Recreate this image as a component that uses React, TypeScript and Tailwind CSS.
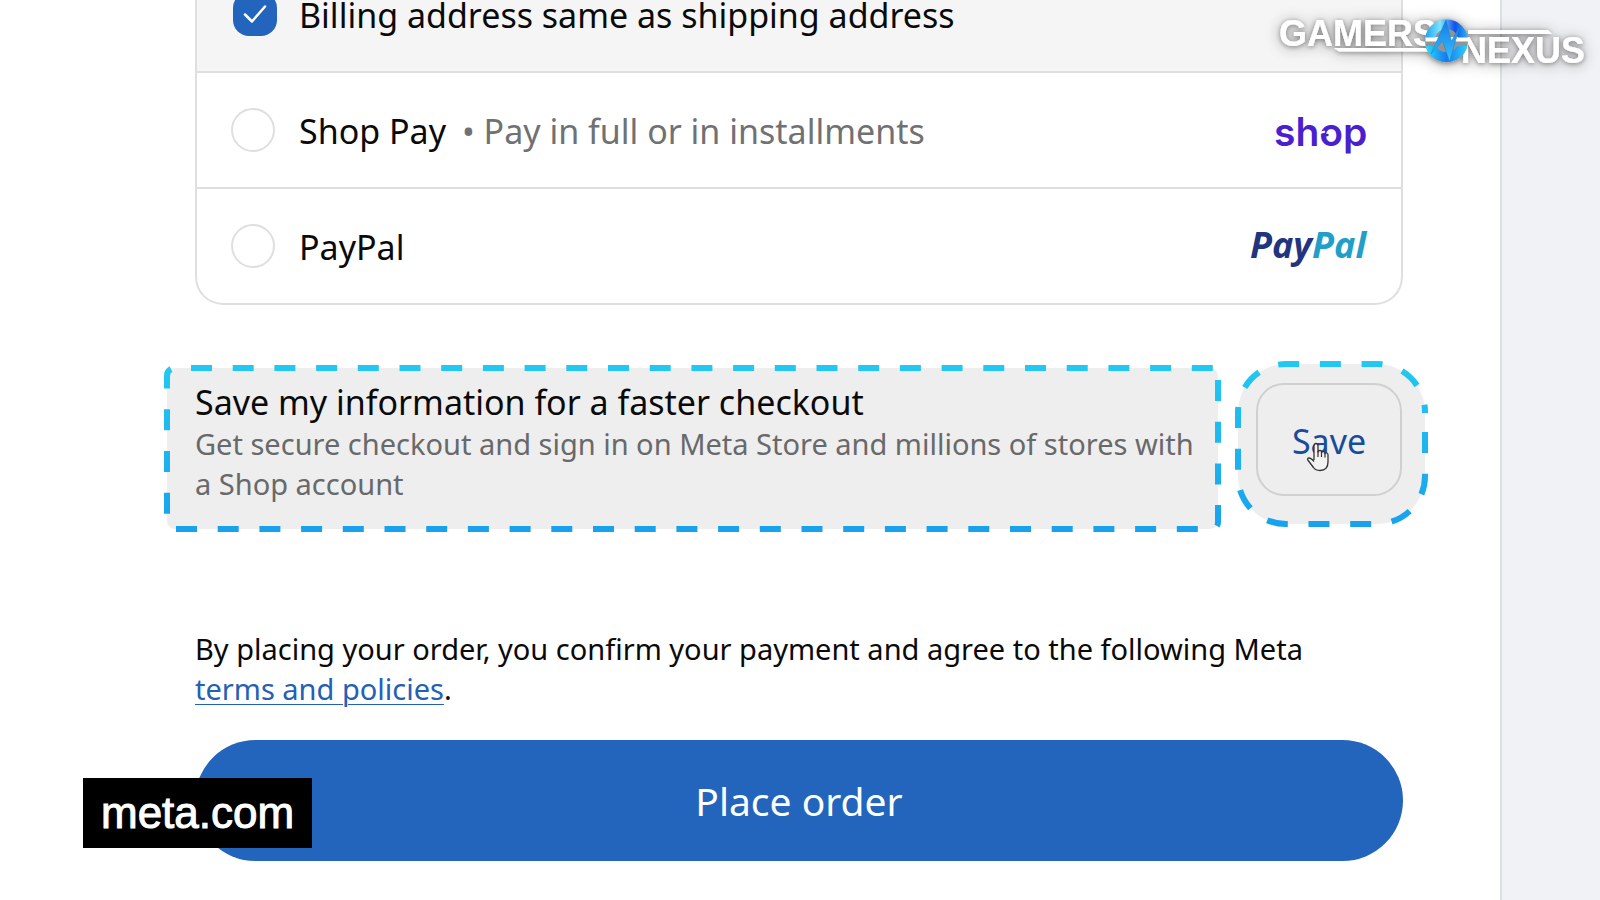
import React from "react";

const DASH = "21 20.7";

function ShopLogo() {
  return (
    <svg width="100" height="46" viewBox="0 0 100 46" className="shrink-0 overflow-visible" role="img" aria-label="Shop">
      <text x="7" y="39" fontSize="39" fontWeight="600" fill="#4a1fd0" className="font-['Inter',sans-serif]">
        shop
      </text>
      <path d="M51 26.500L58 24.500" stroke="#fff" strokeWidth="2" />
      <path d="M56.500 28.500L60.500 28" stroke="#4a1fd0" strokeWidth="2.500" strokeLinecap="round" fill="none" />
    </svg>
  );
}

function PayPalLogo() {
  return (
    <svg width="120" height="46" viewBox="0 0 120 46" className="shrink-0 overflow-visible" role="img" aria-label="PayPal">
      <text x="3" y="35" fontSize="36" fontWeight="700" fontStyle="italic" className="font-['Open_Sans',sans-serif]">
        <tspan fill="#223480">Pay</tspan>
        <tspan fill="#229fc8">Pal</tspan>
      </text>
    </svg>
  );
}

function ChannelLogo() {
  return (
    <svg width="330" height="80" viewBox="0 0 330 80" className="absolute right-0 top-0 overflow-visible" role="img" aria-label="Gamers Nexus">
      <defs>
        <linearGradient id="ringTop" x1="0" y1="0" x2="1" y2="0">
          <stop offset="0" stopColor="#16a5f5" />
          <stop offset="0.35" stopColor="#7fe4ff" />
          <stop offset="0.7" stopColor="#1450ea" />
          <stop offset="1" stopColor="#25b4f8" />
        </linearGradient>
        <linearGradient id="ringBottom" x1="0" y1="0" x2="1" y2="0">
          <stop offset="0" stopColor="#22e0ff" />
          <stop offset="0.5" stopColor="#1a78ee" />
          <stop offset="1" stopColor="#28d2fc" />
        </linearGradient>
        <linearGradient id="bolt" x1="0" y1="0" x2="0" y2="1">
          <stop offset="0" stopColor="#1479ea" />
          <stop offset="1" stopColor="#38c4fb" />
        </linearGradient>
        <filter id="glow" x="-20%" y="-60%" width="140%" height="220%">
          <feDropShadow dx="0" dy="1" stdDeviation="2.5" floodColor="#000" floodOpacity="0.4" />
          <feDropShadow dx="0" dy="1" stdDeviation="7" floodColor="#000" floodOpacity="0.35" />
        </filter>
      </defs>
      <g filter="url(#glow)" fill="#fff" fontSize="36" fontWeight="700" className="font-['Liberation_Sans',sans-serif]">
        <text x="9" y="46">GAMERS</text>
        <text x="191" y="63">NEXUS</text>
        <path d="M64 48H162V51.500H69Z" />
        <path d="M198 30H278L282 34H198Z" />
        <circle cx="176.500" cy="41" r="21.500" fill="#8f9499" />
      </g>
      <path d="M155.500 37H198V41.500H155.500Z" fill="#fff" />
      <path d="M155.300 37.500A21.500 21.500 0 0 1 197.700 37.500H188A12 12 0 0 0 165 37.500Z" fill="url(#ringTop)" />
      <path d="M197.300 46A21.500 21.500 0 0 1 155.700 46H166A12 12 0 0 0 187 46Z" fill="url(#ringBottom)" />
      <path d="M161 54L176 20L181.500 41L190 25.500L179.500 61.500L172.500 41Z" fill="url(#bolt)" stroke="#1b83c4" strokeWidth="0.500" strokeLinejoin="round" />
    </svg>
  );
}

function InfoOutline() {
  return (
    <svg className="pointer-events-none absolute inset-0 h-full w-full overflow-visible" aria-hidden="true">
      <defs>
        <linearGradient id="sky" gradientUnits="userSpaceOnUse" x1="0" y1="0" x2="0" y2="161">
          <stop offset="0" stopColor="#22c8f1" />
          <stop offset="1" stopColor="#18a2ee" />
        </linearGradient>
      </defs>
      <g fill="none" strokeDasharray={DASH} strokeWidth="6">
        <line x1="24" y1="0" x2="100%" y2="0" stroke="#22c8f1" />
        <line x1="9" y1="161" x2="99.900%" y2="161" stroke="#18a2ee" />
        <path d="M4 1Q0 3 0 8V161" stroke="url(#sky)" />
        <svg x="100%" overflow="visible">
          <path d="M0 12V154Q0 158 -3 160" stroke="url(#sky)" />
        </svg>
      </g>
    </svg>
  );
}

function SaveOutline() {
  return (
    <svg className="pointer-events-none absolute inset-0 overflow-visible" width="187" height="160" aria-hidden="true">
      <path
        d="M187 49V112A48 48 0 0 1 139 160H48A48 48 0 0 1 0 112V48A48 48 0 0 1 48 0H139A48 48 0 0 1 187 48V49"
        fill="none"
        stroke="url(#sky)"
        strokeWidth="6"
        strokeDasharray={DASH}
        strokeDashoffset="-19"
      />
    </svg>
  );
}

function HandCursor() {
  return (
    <svg className="pointer-events-none absolute left-[68px] top-[78px]" width="24" height="30" viewBox="0 0 24 30" aria-hidden="true">
      <path
        d="M8 18V4Q8 1.500 10 1.500T12 4V10Q12 8.500 14 8.500T15.500 10.500Q16 9.500 17.500 9.500T19 11.500Q19.500 10.500 20.800 11T22 13V20Q22 28.500 14 28.500Q9.500 28.500 7.500 25.500L1.800 18Q1 16 3 16Q5 16 8 19.500"
        fill="#f3f3f3"
        stroke="#333"
        strokeWidth="1.300"
        strokeLinejoin="round"
      />
      <path d="M12 9V15M15.500 10V15M19 11V15.500" stroke="#333" strokeWidth="1.200" />
    </svg>
  );
}

const radioClass = "size-11 shrink-0 appearance-none rounded-full border-2 border-[#dedfe0] bg-white";

export default function App() {
  return (
    <div className="relative flex min-h-screen overflow-hidden bg-white font-['Noto_Sans',sans-serif] text-[#0a0a0a]">
      <main className="min-w-0 flex-1 pl-[195px] pr-[97px]">
        <div className="-mt-2 rounded-b-[28px] border-2 border-t-0 border-[#dedfe0]">
          <label className="flex h-[79px] items-start gap-[22px] bg-[#f5f5f5] px-9">
            <span className="relative size-11 shrink-0">
              <input type="checkbox" defaultChecked className="size-11 appearance-none rounded-2xl bg-[#2365bc]" />
              <svg className="pointer-events-none absolute inset-0" width="44" height="44" viewBox="0 0 44 44" fill="none" aria-hidden="true">
                <path d="M12 22.500L19 29.500L32 14.500" stroke="#fff" strokeWidth="2.500" strokeLinecap="round" strokeLinejoin="round" />
              </svg>
            </span>
            <span className="text-[34px] leading-[46px]">Billing address same as shipping address</span>
          </label>
          <label className="flex h-[116px] items-center gap-6 border-t-2 border-[#dedfe0] px-[34px]">
            <input type="radio" name="payment" className={radioClass} />
            <span className="flex flex-1 gap-4 pt-[2px] text-[34px] leading-[46px]">
              <span>Shop Pay</span>
              <span className="text-[#707173]">• Pay in full or in installments</span>
            </span>
            <ShopLogo />
          </label>
          <label className="flex h-[116px] items-center gap-6 border-t-2 border-[#dedfe0] px-[34px]">
            <input type="radio" name="payment" className={radioClass} />
            <span className="flex-1 pt-[2px] text-[34px] leading-[46px]">PayPal</span>
            <PayPalLogo />
          </label>
        </div>

        <section className="-ml-[28px] -mr-[22px] mt-[59px] flex items-start gap-5">
          <div className="relative mt-1 min-w-0 flex-1 rounded-lg bg-[#eeeeee] pb-[25px] pl-[28px] pt-3">
            <h2 className="text-[34px] leading-[44px]">Save my information for a faster checkout</h2>
            <p className="text-[29px] leading-[40px] text-[#68696b]">
              Get secure checkout and sign in on Meta Store and millions of stores with
              <br />a Shop account
            </p>
            <InfoOutline />
          </div>
          <div className="relative shrink-0 rounded-[48px] bg-[#eeeeee] pb-7 pl-[18px] pr-[23px] pt-[19px]">
            <button type="button" className="block h-[113px] w-[146px] rounded-[28px] border-2 border-[#d0d0d1] pt-[2px] text-[34px] leading-[46px] text-[#184c9c]">
              Save
            </button>
            <SaveOutline />
            <HandCursor />
          </div>
        </section>

        <p className="mt-[100px] text-[29px] leading-[40px]">
          By placing your order, you confirm your payment and agree to the following Meta
          <br />
          <a href="#terms" className="text-[#2460b5] underline decoration-1 underline-offset-4">
            terms and policies
          </a>
          .
        </p>
        <button type="button" className="mt-[31px] block h-[121px] w-full rounded-full bg-[#2365bc] pt-[2px] text-[39px] text-white">
          Place order
        </button>
      </main>
      <aside className="w-[100px] shrink-0 border-l-2 border-[#dedfe0] bg-[#f0f2f5]" />

      <ChannelLogo />
      <div className="absolute bottom-[52px] left-[83px] bg-black px-[18px] py-[11px] font-['Liberation_Sans',sans-serif] text-[44px] leading-[48px] text-white [-webkit-text-stroke:1px_white]">
        meta.com
      </div>
    </div>
  );
}
